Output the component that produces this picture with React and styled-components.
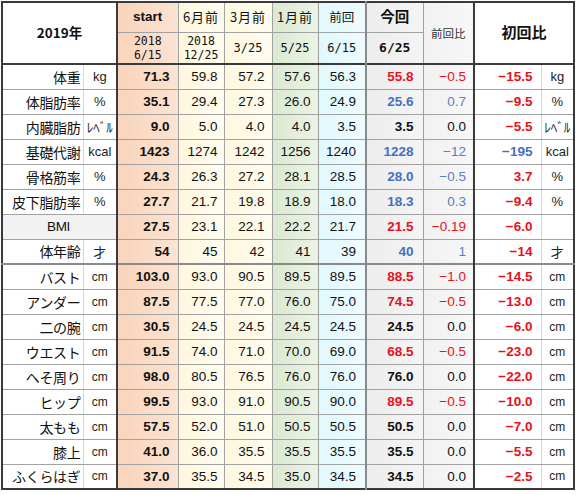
import React from 'react';
import styled, { createGlobalStyle } from 'styled-components';

const GlobalStyle = createGlobalStyle`
    html, body {
        margin: 0;
        padding: 0;
        background: #fff;
    }
    body {
        font-family: "Liberation Sans", "Noto Sans CJK JP", sans-serif;
        color: #111;
    }
`

const tones = {
    white: '#fff',
    peach: 'linear-gradient(to right, #f8d4ba, #fce3d2)',
    yellow: 'linear-gradient(to right, #fff7de, #fffcf0)',
    green: 'linear-gradient(to right, #dae9d1, #ebf3e5)',
    cyan: 'linear-gradient(to right, #e0f8fd, #eefbfe)',
    gray: 'linear-gradient(to right, #ededed, #f4f4f4)',
    light: 'linear-gradient(to right, #f1f1f1, #f7f7f7)',
    label: '#f2f2f2',
}

const inks = {
    black: '#111',
    red: '#e8101c',
    blue: '#4470c2',
    soft: '#5b7dc4',
}

const edges = {
    thick: '2px solid #3a3a3a',
    mid: '2px solid #8a8a8a',
    faint: '1px solid #d6d6d6',
}

const Page = styled.div`
    padding: 1px 0 0 1px;
`

const Sheet = styled.table`
    border-collapse: collapse;
    table-layout: fixed;
    width: 574px;
    border: 2px solid #3a3a3a;
`

const Row = styled.tr`
    height: ${props => props.$h || 25}px;
    & > td {
        border-top: ${props => props.$top ? edges[props.$top] : '1px solid #a2a2a2'};
    }
`

const Cell = styled.td`
    border: 1px solid #a2a2a2;
    ${props => props.$left ? `border-left: ${edges[props.$left]};` : ''}
    ${props => props.$right ? `border-right: ${edges[props.$right]};` : ''}
    background: ${props => tones[props.$tone || 'white']};
    text-align: ${props => props.$align || 'right'};
    padding: 0 ${props => props.$pad ?? 7}px 0 0;
    font-size: 13.5px;
    font-weight: ${props => props.$bold ? 700 : 400};
    color: ${props => inks[props.$ink || 'black']};
    white-space: nowrap;
    overflow: hidden;
    vertical-align: middle;
`

const Label = styled(Cell)`
    font-family: ${props => props.$latin ? '"Liberation Sans", sans-serif' : '"Noto Sans CJK JP", sans-serif'};
    font-size: ${props => props.$latin ? 13.5 : 14}px;
    padding-right: 2px;
    letter-spacing: -0.3px;
`

const Unit = styled(Cell)`
    font-family: "Liberation Sans", "Noto Sans CJK JP", sans-serif;
    font-size: ${props => props.$small ? 12 : 13}px;
    text-align: center;
    padding: 0;
    color: #222;
`

const HeadCell = styled(Cell)`
    text-align: center;
    padding: 0;
    font-family: "DejaVu Sans Mono", "Noto Sans CJK JP", monospace;
    font-size: ${props => props.$size || 11.5}px;
    line-height: 14px;
    color: ${props => props.$dim ? '#333' : '#111'};
`

const HeadWord = styled.span`
    font-family: ${props => props.$latin ? '"Liberation Sans", sans-serif' : '"Noto Sans CJK JP", sans-serif'};
    font-size: ${props => props.$size || 13}px;
    font-weight: ${props => props.$bold ? 700 : 400};
    letter-spacing: ${props => props.$gap || 0}px;
`

const columns = [
    { tone: 'peach', bold: true, left: 'thick', pad: 8 },
    { tone: 'yellow', pad: 6 },
    { tone: 'yellow', pad: 7 },
    { tone: 'green', pad: 7 },
    { tone: 'cyan', pad: 9 },
    { tone: 'gray', bold: true, left: 'mid', pad: 9 },
    { tone: 'light', pad: 7 },
    { tone: 'white', bold: true, left: 'thick', pad: 8, right: 'faint' },
]

// label, unit, start, 6m, 3m, 1m, prev, now, diff, first, ink of now, ink of diff, ink of first
const rows = [
    ['体重', 'kg', '71.3', '59.8', '57.2', '57.6', '56.3', '55.8', '−0.5', '−15.5', 'red', 'red', 'red'],
    ['体脂肪率', '%', '35.1', '29.4', '27.3', '26.0', '24.9', '25.6', '0.7', '−9.5', 'blue', 'soft', 'red'],
    ['内臓脂肪', 'ﾚﾍﾞﾙ', '9.0', '5.0', '4.0', '4.0', '3.5', '3.5', '0.0', '−5.5', 'black', 'black', 'red'],
    ['基礎代謝', 'kcal', '1423', '1274', '1242', '1256', '1240', '1228', '−12', '−195', 'blue', 'soft', 'blue'],
    ['骨格筋率', '%', '24.3', '26.3', '27.2', '28.1', '28.5', '28.0', '−0.5', '3.7', 'blue', 'soft', 'red'],
    ['皮下脂肪率', '%', '27.7', '21.7', '19.8', '18.9', '18.0', '18.3', '0.3', '−9.4', 'blue', 'soft', 'red'],
    ['BMI', '', '27.5', '23.1', '22.1', '22.2', '21.7', '21.5', '−0.19', '−6.0', 'red', 'red', 'red'],
    ['体年齢', '才', '54', '45', '42', '41', '39', '40', '1', '−14', 'blue', 'soft', 'red'],
    ['バスト', 'cm', '103.0', '93.0', '90.5', '89.5', '89.5', '88.5', '−1.0', '−14.5', 'red', 'red', 'red'],
    ['アンダー', 'cm', '87.5', '77.5', '77.0', '76.0', '75.0', '74.5', '−0.5', '−13.0', 'red', 'red', 'red'],
    ['二の腕', 'cm', '30.5', '24.5', '24.5', '24.5', '24.5', '24.5', '0.0', '−6.0', 'black', 'black', 'red'],
    ['ウエスト', 'cm', '91.5', '74.0', '71.0', '70.0', '69.0', '68.5', '−0.5', '−23.0', 'red', 'red', 'red'],
    ['へそ周り', 'cm', '98.0', '80.5', '76.5', '76.0', '76.0', '76.0', '0.0', '−22.0', 'black', 'black', 'red'],
    ['ヒップ', 'cm', '99.5', '93.0', '91.0', '90.5', '90.0', '89.5', '−0.5', '−10.0', 'red', 'red', 'red'],
    ['太もも', 'cm', '57.5', '52.0', '51.0', '50.5', '50.5', '50.5', '0.0', '−7.0', 'black', 'black', 'red'],
    ['膝上', 'cm', '41.0', '36.0', '35.5', '35.5', '35.5', '35.5', '0.0', '−5.5', 'black', 'black', 'red'],
    ['ふくらはぎ', 'cm', '37.0', '35.5', '34.5', '35.0', '34.5', '34.5', '0.0', '−2.5', 'black', 'black', 'red'],
]

const widths = [81, 34, 61, 46, 48, 46, 48, 57, 51, 67, 33]

const DataRow = ({ item, index }) => {
    const [label, unit, ...rest] = item
    const values = rest.slice(0, 8)
    const inkOf = [null, null, null, null, null, rest[8], rest[9], rest[10]]
    const top = index === 0 ? 'thick' : (index === 8 ? 'mid' : null)
    return (
        <Row $top={top}>
            {label === 'BMI'
                ? <Label colSpan={2} $tone="label" $align="center" $latin>BMI</Label>
                : <>
                    <Label $right="faint">{label}</Label>
                    <Unit $small={unit === 'cm'}>{unit}</Unit>
                </>}
            {values.map((v, i) => (
                <Cell
                    key={i}
                    $tone={columns[i].tone}
                    $bold={columns[i].bold}
                    $left={columns[i].left}
                    $right={columns[i].right}
                    $pad={columns[i].pad}
                    $ink={inkOf[i] || 'black'}
                >{v}</Cell>
            ))}
            <Unit $small={unit === 'cm'}>{label === 'BMI' ? '' : unit}</Unit>
        </Row>
    )
}

const App = () => {
    return (
        <Page>
            <GlobalStyle />
            <Sheet>
                <colgroup>
                    {widths.map((w, i) => <col key={i} style={{ width: w }} />)}
                </colgroup>
                <tbody>
                    <Row $h={30}>
                        <HeadCell colSpan={2} rowSpan={2}>
                            <HeadWord $size={13.5} $bold>2019年</HeadWord>
                        </HeadCell>
                        <HeadCell $tone="peach" $left="thick">
                            <HeadWord $size={13.5} $bold $latin>start</HeadWord>
                        </HeadCell>
                        <HeadCell $tone="yellow"><HeadWord $gap={1}>6月前</HeadWord></HeadCell>
                        <HeadCell $tone="yellow"><HeadWord $gap={1}>3月前</HeadWord></HeadCell>
                        <HeadCell $tone="green"><HeadWord $gap={1}>1月前</HeadWord></HeadCell>
                        <HeadCell $tone="cyan"><HeadWord $size={12.5}>前回</HeadWord></HeadCell>
                        <HeadCell $tone="gray" $left="mid"><HeadWord $size={14.5} $bold>今回</HeadWord></HeadCell>
                        <HeadCell rowSpan={2} $tone="light" $dim><HeadWord $size={11.5}>前回比</HeadWord></HeadCell>
                        <HeadCell colSpan={2} rowSpan={2} $left="thick">
                            <HeadWord $size={15} $bold>初回比</HeadWord>
                        </HeadCell>
                    </Row>
                    <Row $h={32}>
                        <HeadCell $tone="peach" $left="thick">2018<br />6/15</HeadCell>
                        <HeadCell $tone="yellow">2018<br />12/25</HeadCell>
                        <HeadCell $tone="yellow" $size={12}>3/25</HeadCell>
                        <HeadCell $tone="green" $size={12}>5/25</HeadCell>
                        <HeadCell $tone="cyan" $size={12}>6/15</HeadCell>
                        <HeadCell $tone="gray" $left="mid" $size={13} $bold>6/25</HeadCell>
                    </Row>
                    {rows.map((item, i) => <DataRow key={i} item={item} index={i} />)}
                </tbody>
            </Sheet>
        </Page>
    )
}

export default App
